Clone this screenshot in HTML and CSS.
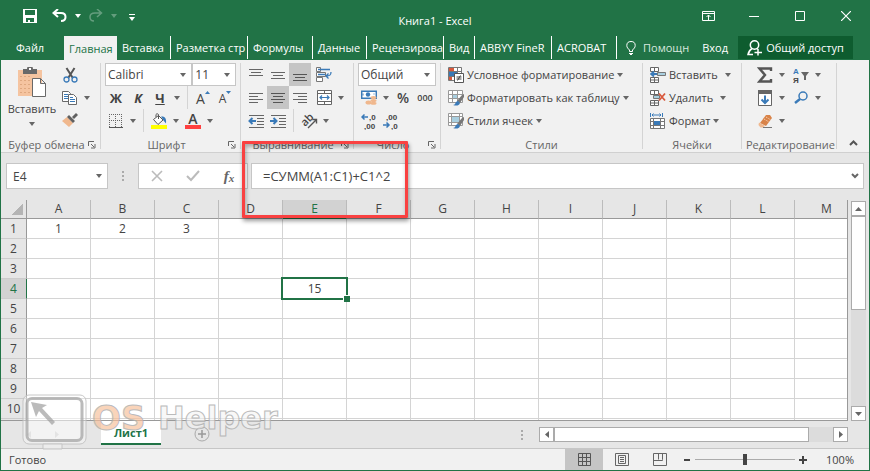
FILE: index.html
```
<!DOCTYPE html>
<html lang="ru">
<head>
    <meta charset="UTF-8">
    <meta name="viewport" content="width=device-width, initial-scale=1.0">
    <title>Книга1 - Excel</title>
    <link rel="stylesheet" href="styles.css">
</head>
<body>
<div class="window">
    <header class="titlebar">
        <div class="quick-access">
            <button class="qa-button" aria-label="Сохранить"><svg width="14" height="14" viewBox="0 0 14 14"><path d="M0 0h14v14H0zM2 1v5h10V1zM3 9v4h2v-2h2v2h4V9z" fill="#fff" fill-rule="evenodd"/></svg></button>
            <button class="qa-button" aria-label="Отменить"><svg width="16" height="14" viewBox="0 0 16 14"><path d="M6 0L1.500 4 6 8M2 4h7c3 0 4.500 1.500 4.500 4s-2 4-4.500 4" fill="none" stroke="#fff" stroke-width="2"/></svg></button>
            <span class="caret caret-white"></span>
            <button class="qa-button faded" aria-label="Вернуть"><svg width="16" height="14" viewBox="0 0 16 14"><path d="M9 0l4.500 4L9 8M13 4H7C4 4 2 5.500 2 8s1.500 4 4 4" fill="none" stroke="#fff" stroke-width="1.500"/></svg></button>
            <span class="caret caret-white faded"></span>
            <button class="qa-button qa-more" aria-label="Настройка панели"><svg width="6" height="8" viewBox="0 0 6 8"><path d="M0 0h6v1H0zM0 3h6L3 7z" fill="#fff"/></svg></button>
        </div>
        <div class="title">Книга1 - Excel</div>
        <div class="window-buttons">
            <button aria-label="Параметры ленты"><svg width="13" height="10" viewBox="0 0 13 10"><path d="M.5.5h12v9H.5zM0 2.500h13M6.500 9V4M4.500 6l2-2 2 2" fill="none" stroke="#fff"/></svg></button>
            <button aria-label="Свернуть"><svg width="10" height="10" viewBox="0 0 10 10"><path d="M0 5.500h10" stroke="#fff"/></svg></button>
            <button aria-label="Развернуть"><svg width="10" height="10" viewBox="0 0 10 10"><path d="M.5.5h9v9h-9z" fill="none" stroke="#fff"/></svg></button>
            <button aria-label="Закрыть"><svg width="10" height="10" viewBox="0 0 10 10"><path d="M0 0l10 10M10 0L0 10" stroke="#fff" stroke-width="1.200"/></svg></button>
        </div>
    </header>

    <nav class="tabs">
        <button class="tab tab-file">Файл</button>
        <button class="tab active">Главная</button>
        <button class="tab w-54">Вставка</button>
        <button class="tab w-77">Разметка стр</button>
        <button class="tab w-65">Формулы</button>
        <button class="tab w-54">Данные</button>
        <button class="tab w-77">Рецензирова</button>
        <button class="tab w-31">Вид</button>
        <button class="tab w-77">ABBYY FineR</button>
        <button class="tab w-65">ACROBAT</button>
        <button class="tell-me"><svg width="10" height="14" viewBox="0 0 10 14"><path d="M3.500 10.500V9C2 7.500.8 6.500.8 4.500a4.200 4 0 0 1 8.400 0c0 2-1.200 3-2.700 4.500v1.500zM3 12.500h4M4 13.500h2" fill="none" stroke="#fff"/></svg>Помощн</button>
        <button class="sign-in">Вход</button>
        <button class="share"><svg width="15" height="16" viewBox="0 0 15 16"><circle cx="7.500" cy="5" r="4.200" fill="none" stroke="#fff" stroke-width="1.500"/><path d="M5 8.500C2.500 10 1.500 12 1 14.500h5M10 8.500l1 1M11 9v6.500M7.500 12.500H15" fill="none" stroke="#fff" stroke-width="1.500"/></svg>Общий доступ</button>
    </nav>

    <section class="ribbon">
        <!-- Буфер обмена -->
        <div class="group group-clipboard">
            <div class="clipboard-tools">
                <button class="paste">
                    <svg width="30" height="31" viewBox="0 0 30 31"><path d="M1 3h24v26H1z" fill="#f5c4a0"/><path d="M4 9v17M8 9v17M12 9v17" stroke="#c98d60" stroke-dasharray="1 3"/><path d="M6 2h4a3 3 0 0 1 6 0h4v5H6z" fill="#696969"/><path d="M12 1h2v2h-2z" fill="#fff"/><path d="M15.500 11.500h8l5 5v13h-13zM23.500 11.500v5h5" fill="#fff" stroke="#696969"/></svg>
                    <span>Вставить</span>
                    <span class="caret"></span>
                </button>
                <div class="tool-column">
                    <div class="tool-row"><button class="tool" aria-label="Вырезать"><svg width="15" height="16" viewBox="0 0 15 16"><path d="M3.500 1l6 9.500M11.500 1l-6 9.500" stroke="#555" stroke-width="2" fill="none"/><circle cx="3.500" cy="12.500" r="2.500" fill="none" stroke="#3a7ab8" stroke-width="1.300"/><circle cx="11.500" cy="12.500" r="2.500" fill="none" stroke="#3a7ab8" stroke-width="1.300"/></svg></button></div>
                    <div class="tool-row"><button class="tool" aria-label="Копировать"><svg width="16" height="14" viewBox="0 0 16 14"><path d="M.5.5h6l2 2v8h-8z" fill="#fff" stroke="#696969"/><path d="M2 3.500h4M2 5.500h4M2 7.500h4" stroke="#3a7ab8"/><path d="M6.500 3.500h5l3 3v7h-8z" fill="#fff" stroke="#696969"/><path d="M8 6.500h3M8 8.500h5M8 10.500h5" stroke="#3a7ab8"/></svg></button><button class="drop" aria-label="Ещё"><span class="caret"></span></button></div>
                    <div class="tool-row"><button class="tool" aria-label="Формат по образцу"><svg width="16" height="15" viewBox="0 0 16 15"><path d="M0 8l5-4 6 6-4 4z" fill="#f0b88e"/><path d="M5 4l2-2 6 6-2 2zM10 4l4-4 2 2-4 4z" fill="#606060"/></svg></button></div>
                </div>
            </div>
            <div class="group-footer"><span>Буфер обмена</span><button class="launcher" aria-label="Буфер обмена"><svg width="8" height="8" viewBox="0 0 8 8"><path d="M.5 5V.5H6M3 3l3 3M7 3v4H3" fill="none" stroke="#666"/></svg></button></div>
        </div>

        <!-- Шрифт -->
        <div class="group group-font">
            <div class="tool-row">
                <label class="combo combo-font"><select aria-label="Шрифт"><option>Calibri</option></select></label>
                <label class="combo combo-size"><select aria-label="Размер"><option>11</option></select></label>
            </div>
            <div class="tool-row">
                <button class="tool glyph">Ж</button>
                <button class="tool glyph italic">К</button>
                <button class="tool glyph underline">Ч</button>
                <button class="drop" aria-label="Ещё"><span class="caret"></span></button>
                <span class="divider"></span>
                <button class="tool glyph-large">A<svg width="5" height="3" viewBox="0 0 5 3"><path d="M0 3h5L2.500 0z" fill="#3a7ab8"/></svg></button>
                <button class="tool glyph-small">A<svg width="5" height="3" viewBox="0 0 5 3"><path d="M0 0h5L2.500 3z" fill="#3a7ab8"/></svg></button>
            </div>
            <div class="tool-row">
                <button class="tool" aria-label="Границы"><svg width="14" height="14" viewBox="0 0 14 14"><path d="M0 .5h14M0 6.500h14M.5 0v13M6.500 0v13M12.500 0v13" stroke="#666" stroke-dasharray="1 1" fill="none"/><path d="M0 13.500h14" stroke="#555"/></svg></button>
                <button class="drop" aria-label="Ещё"><span class="caret"></span></button>
                <span class="divider"></span>
                <button class="tool" aria-label="Цвет заливки"><svg width="16" height="16" viewBox="0 0 16 16"><path d="M0 12h16v4H0z" fill="#ff0"/><path d="M2.500 6.500l5-4 4.500 4.500-5 4.500z" fill="#fff" stroke="#555"/><path d="M7.500 6V1.500A1.500 1.500 0 0 0 5 1.500V4" fill="none" stroke="#555"/><path d="M10 3.500c4-.5 5.500 2 5 7l-2.500-3z" fill="#3a7ab8"/></svg></button>
                <button class="drop" aria-label="Ещё"><span class="caret"></span></button>
                <button class="tool font-color">A</button>
                <button class="drop" aria-label="Ещё"><span class="caret"></span></button>
            </div>
            <div class="group-footer"><span>Шрифт</span><button class="launcher" aria-label="Шрифт"><svg width="8" height="8" viewBox="0 0 8 8"><path d="M.5 5V.5H6M3 3l3 3M7 3v4H3" fill="none" stroke="#666"/></svg></button></div>
        </div>

        <!-- Выравнивание -->
        <div class="group group-align">
            <div class="tool-row">
                <button class="tool" aria-label="По верхнему краю"><svg width="14" height="14" viewBox="0 0 14 14"><path d="M0 1.500h14M2 4.500h10M0 7.500h14" stroke="#666"/></svg></button>
                <button class="tool" aria-label="По середине"><svg width="14" height="14" viewBox="0 0 14 14"><path d="M0 4.500h14M2 7.500h10M0 10.500h14" stroke="#666"/></svg></button>
                <button class="tool pressed" aria-label="По нижнему краю"><svg width="14" height="14" viewBox="0 0 14 14"><path d="M0 6.500h14M2 9.500h10M0 12.500h14" stroke="#555"/></svg></button>
                <button class="tool after-gap" aria-label="Перенести текст"><svg width="16" height="15" viewBox="0 0 16 15"><path d="M.5.500h4v4h-4zM.5 5.500h9v4h-9zM.5 10.500h6v4h-6z" fill="#fff" stroke="#777"/><path d="M2 2.500h12M2 7.500h7" stroke="#3a7ab8" stroke-width="1.500"/><path d="M15 5c0 3-1 4-5 4M12.500 6.500L10 9l2.500 2.500" fill="none" stroke="#3a7ab8" stroke-width="1.300"/></svg></button>
            </div>
            <div class="tool-row">
                <button class="tool" aria-label="По левому краю"><svg width="14" height="12" viewBox="0 0 14 12"><path d="M0 1.500h14M0 4.500h9M0 7.500h14M0 10.500h9" stroke="#666"/></svg></button>
                <button class="tool pressed" aria-label="По центру"><svg width="14" height="12" viewBox="0 0 14 12"><path d="M0 1.500h14M2 4.500h10M0 7.500h14M2 10.500h10" stroke="#555"/></svg></button>
                <button class="tool" aria-label="По правому краю"><svg width="14" height="12" viewBox="0 0 14 12"><path d="M0 1.500h14M5 4.500h9M0 7.500h14M5 10.500h9" stroke="#666"/></svg></button>
                <button class="tool after-gap" aria-label="Объединить"><svg width="15" height="15" viewBox="0 0 15 15"><path d="M.5.500h14v14H.5zM.5 3.500h14M.5 11.500h14M7.500.5v3M7.500 11.500v3" fill="#fff" stroke="#666"/><path d="M3 7.500h9M5 5.500l-2 2 2 2M10 5.500l2 2-2 2" fill="none" stroke="#3a7ab8" stroke-width="1.200"/></svg></button>
                <button class="drop" aria-label="Ещё"><span class="caret"></span></button>
            </div>
            <div class="tool-row">
                <button class="tool" aria-label="Уменьшить отступ"><svg width="16" height="14" viewBox="0 0 16 14"><path d="M1 1.500h15M9 4.500h7M9 7.500h7M9 10.500h7M1 13.500h15" stroke="#666"/><path d="M1 7h7M4.500 4L1.500 7l3 3" fill="none" stroke="#3a7ab8" stroke-width="2"/></svg></button>
                <button class="tool" aria-label="Увеличить отступ"><svg width="16" height="14" viewBox="0 0 16 14"><path d="M1 1.500h15M9 4.500h7M9 7.500h7M9 10.500h7M1 13.500h15" stroke="#666"/><path d="M0 7h7M3.500 4l3 3-3 3" fill="none" stroke="#3a7ab8" stroke-width="2"/></svg></button>
                <span class="divider"></span>
                <button class="tool" aria-label="Ориентация"><svg width="18" height="18" viewBox="0 0 18 18"><text x="5" y="15" transform="rotate(-45 5 15)" class="rotated">ab</text><path d="M8 16l8-8M12.500 7.500H16.500V11.500" fill="none" stroke="#555" stroke-width="1.400"/></svg></button>
                <button class="drop" aria-label="Ещё"><span class="caret"></span></button>
            </div>
            <div class="group-footer"><span>Выравнивание</span><button class="launcher" aria-label="Выравнивание"><svg width="8" height="8" viewBox="0 0 8 8"><path d="M.5 5V.5H6M3 3l3 3M7 3v4H3" fill="none" stroke="#666"/></svg></button></div>
        </div>

        <!-- Число -->
        <div class="group group-number">
            <div class="tool-row">
                <label class="combo combo-format"><select aria-label="Формат числа"><option>Общий</option></select></label>
            </div>
            <div class="tool-row">
                <button class="tool" aria-label="Денежный формат"><svg width="16" height="15" viewBox="0 0 16 15"><path d="M.7 1.200h14.600v7H.7z" fill="#fff" stroke="#3a7ab8" stroke-width="1.500"/><circle cx="7" cy="4.500" r="2.200" fill="#3a7ab8"/><path d="M2 3.500v2M13 3.500v1" stroke="#3a7ab8"/><ellipse cx="12.500" cy="7.500" rx="3" ry="1.500" fill="#f0b88e"/><ellipse cx="12.500" cy="10.500" rx="3" ry="1.500" fill="#f0b88e"/><ellipse cx="12.500" cy="13.300" rx="3" ry="1.500" fill="#f0b88e"/><ellipse cx="7.500" cy="12.500" rx="3" ry="2" fill="#f0b88e"/></svg></button>
                <button class="drop" aria-label="Ещё"><span class="caret"></span></button>
                <button class="tool percent">%</button>
                <button class="tool thousands">000</button>
            </div>
            <div class="tool-row">
                <button class="tool" aria-label="Увеличить разрядность"><svg width="16" height="18" viewBox="0 0 16 18"><path d="M1 5h6M3.500 2.500L1 5l2.500 2.500" fill="none" stroke="#3a7ab8" stroke-width="1.500"/><text x="8" y="8" class="digits">,0</text><text x="3" y="17" class="digits">,00</text></svg></button>
                <button class="tool" aria-label="Уменьшить разрядность"><svg width="16" height="18" viewBox="0 0 16 18"><path d="M0 13h6M3.500 10.500L6 13l-2.500 2.500" fill="none" stroke="#3a7ab8" stroke-width="1.500"/><text x="3" y="8" class="digits">,00</text><text x="8" y="17" class="digits">,0</text></svg></button>
            </div>
            <div class="group-footer"><span>Число</span><button class="launcher" aria-label="Число"><svg width="8" height="8" viewBox="0 0 8 8"><path d="M.5 5V.5H6M3 3l3 3M7 3v4H3" fill="none" stroke="#666"/></svg></button></div>
        </div>

        <!-- Стили -->
        <div class="group group-styles">
            <div class="tool-row"><button class="command"><svg width="16" height="16" viewBox="0 0 16 16"><path d="M.5.500h13v13H.5zM.5 4.500h13M.5 9.500h13M9.500.5v13" fill="#fff" stroke="#777"/><path d="M1 1h5v3H1z" fill="#d9593d"/><path d="M1 5h8v4H1z" fill="#3a7ab8"/><path d="M1 10h3v3H1z" fill="#d9593d"/><path d="M6.500 6.500h9v9h-9z" fill="#fff" stroke="#555"/><path d="M8.500 10h5M8.500 12h5M12.500 8.500l-3 5" stroke="#444"/></svg>Условное форматирование<span class="caret"></span></button></div>
            <div class="tool-row"><button class="command"><svg width="16" height="16" viewBox="0 0 16 16"><path d="M.5.500h14v12H.5zM.5 4.500h14M.5 8.500h14M4.500.5v12M9.500.5v12" fill="#fff" stroke="#999"/><path d="M5 5h4v3H5z" fill="#a9cfe0"/><path d="M9 11l5-6 2-1v3l-4 6z" fill="#777"/><path d="M5 15c3 0 2-4 5-4l2 2c-1 3-4 3-7 2z" fill="#3a7ab8"/></svg>Форматировать как таблицу<span class="caret"></span></button></div>
            <div class="tool-row"><button class="command"><svg width="16" height="16" viewBox="0 0 16 16"><path d="M.5.500h14v12H.5zM.5 3.500h14M.5 9.500h14M3.500.5v12M11.500.5v12" fill="#fff" stroke="#999"/><path d="M4 4h7v5H4z" fill="#a9cfe0"/><path d="M9 11l5-6 2-1v3l-4 6z" fill="#777"/><path d="M5 15c3 0 2-4 5-4l2 2c-1 3-4 3-7 2z" fill="#3a7ab8"/></svg>Стили ячеек<span class="caret"></span></button></div>
            <div class="group-footer"><span>Стили</span></div>
        </div>

        <!-- Ячейки -->
        <div class="group group-cells">
            <div class="tool-row"><button class="command"><svg width="16" height="16" viewBox="0 0 16 16"><path d="M.5.500h8v4h-8zM4.500.5v4M.5 10.500h8v5h-8zM4.500 10.500v5M.5 13h8" fill="#fff" stroke="#666"/><path d="M7.500 5.500h8v3h-8z" fill="#a9cfe0" stroke="#777"/><path d="M1 7h6M4 4.500L1 7l3 2.500" fill="none" stroke="#3a7ab8" stroke-width="1.800"/></svg>Вставить</button><button class="drop drop-wide" aria-label="Ещё"><span class="caret"></span></button></div>
            <div class="tool-row"><button class="command"><svg width="16" height="16" viewBox="0 0 16 16"><path d="M.5.500h8v4h-8zM4.500.5v4M.5 10.500h8v5h-8zM4.500 10.500v5M.5 13h8" fill="#fff" stroke="#666"/><path d="M3.500 5.500h6v3h-6z" fill="#a9cfe0" stroke="#777"/><path d="M9 3.500l6 7M15 3.500l-6 7" stroke="#d9593d" stroke-width="1.800"/></svg>Удалить</button><button class="drop drop-wide" aria-label="Ещё"><span class="caret"></span></button></div>
            <div class="tool-row"><button class="command"><svg width="16" height="16" viewBox="0 0 16 16"><path d="M.5 0v4M12.500 0v4M2 2h9M3.500.5L2 2l1.500 1.500M9.500.5L11 2 9.500 3.500" fill="none" stroke="#3a7ab8"/><path d="M.5 5.500h14v10H.5zM.5 8.500h14M.5 12.500h14M3.500 5.500v10M10.500 5.500v10" fill="#fff" stroke="#777"/><path d="M4 8h6v4H4z" fill="#3a7ab8"/></svg>Формат<span class="caret"></span></button></div>
            <div class="group-footer"><span>Ячейки</span></div>
        </div>

        <!-- Редактирование -->
        <div class="group group-edit">
            <div class="tool-row">
                <button class="tool" aria-label="Сумма"><svg width="16" height="16" viewBox="0 0 16 16"><path d="M14 4V1.500H2.500L8 8l-5.500 6.500H14V12" fill="none" stroke="#555" stroke-width="2.400"/></svg></button>
                <button class="drop" aria-label="Ещё"><span class="caret"></span></button>
                <button class="tool after-gap" aria-label="Сортировка и фильтр"><svg width="16" height="18" viewBox="0 0 16 18"><text x="0" y="8" class="sort-a">А</text><text x="0" y="17" class="sort-z">Я</text><path d="M8 6h8l-3 4v4h-2v-4z" fill="#666"/></svg></button>
                <button class="drop" aria-label="Ещё"><span class="caret"></span></button>
            </div>
            <div class="tool-row">
                <button class="tool" aria-label="Заполнить"><svg width="14" height="16" viewBox="0 0 14 16"><path d="M.5 1.500h13v14H.5z" fill="#fff" stroke="#666"/><path d="M0 0h14v4H0z" fill="#666"/><path d="M7 5.500v7M3.500 9.500L7 13l3.500-3.500" fill="none" stroke="#3a7ab8" stroke-width="2"/></svg></button>
                <button class="drop" aria-label="Ещё"><span class="caret"></span></button>
                <button class="tool after-gap" aria-label="Найти и выделить"><svg width="15" height="14" viewBox="0 0 15 14"><circle cx="9" cy="5" r="4" fill="none" stroke="#3a7ab8" stroke-width="1.500"/><path d="M6 8l-5 4" stroke="#3a7ab8" stroke-width="2.400"/></svg></button>
                <button class="drop" aria-label="Ещё"><span class="caret"></span></button>
            </div>
            <div class="tool-row">
                <button class="tool" aria-label="Очистить"><svg width="15" height="14" viewBox="0 0 15 14"><path d="M2 9l6-8h4l2 3-6 8z" fill="#d98348"/><path d="M1 8.500L7 12l-2 1.500H2.500L.5 11z" fill="#f0b88e"/><path d="M6 5l5 3M8 3l5 3" stroke="#f7d9c0" stroke-dasharray="1 1"/><path d="M5 13.500h9" stroke="#777"/></svg></button>
                <button class="drop" aria-label="Ещё"><span class="caret"></span></button>
            </div>
            <div class="group-footer"><span>Редактирование</span></div>
        </div>

        <button class="collapse" aria-label="Свернуть ленту"><svg width="9" height="6" viewBox="0 0 9 6"><path d="M1 5l3.500-3.500L8 5" fill="none" stroke="#555" stroke-width="2"/></svg></button>

        <div class="highlight-frame"></div>
    </section>

    <section class="formula-bar">
        <label class="combo name-box"><input type="text" value="E4" aria-label="Имя ячейки"></label>
        <span class="grip"></span>
        <div class="formula-buttons">
            <button aria-label="Отмена"><svg width="12" height="12" viewBox="0 0 12 12"><path d="M1 1l10 10M11 1L1 11" stroke="#bbb" stroke-width="1.600"/></svg></button>
            <button aria-label="Ввод"><svg width="14" height="12" viewBox="0 0 14 12"><path d="M1 6l4 4 8-9" fill="none" stroke="#bbb" stroke-width="2"/></svg></button>
            <button class="fx">f<small>x</small></button>
        </div>
        <div class="formula-field">
            <input type="text" value="=СУММ(A1:C1)+C1^2" aria-label="Строка формул">
            <button aria-label="Развернуть строку формул"><svg width="8" height="6" viewBox="0 0 8 6"><path d="M1 1l3 3 3-3" fill="none" stroke="#666" stroke-width="2"/></svg></button>
        </div>
    </section>

    <main class="sheet">
        <div class="grid-view">
            <table class="grid">
                <thead>
                    <tr><th class="corner"></th><th>A</th><th>B</th><th>C</th><th>D</th><th class="selected">E</th><th>F</th><th>G</th><th>H</th><th>I</th><th>J</th><th>K</th><th>L</th><th>M</th></tr>
                </thead>
                <tbody>
                    <tr><th>1</th><td>1</td><td>2</td><td>3</td><td></td><td></td><td></td><td></td><td></td><td></td><td></td><td></td><td></td><td></td></tr>
                    <tr><th>2</th><td></td><td></td><td></td><td></td><td></td><td></td><td></td><td></td><td></td><td></td><td></td><td></td><td></td></tr>
                    <tr><th>3</th><td></td><td></td><td></td><td></td><td></td><td></td><td></td><td></td><td></td><td></td><td></td><td></td><td></td></tr>
                    <tr><th class="selected">4</th><td></td><td></td><td></td><td></td><td class="current">15</td><td></td><td></td><td></td><td></td><td></td><td></td><td></td><td></td></tr>
                    <tr><th>5</th><td></td><td></td><td></td><td></td><td></td><td></td><td></td><td></td><td></td><td></td><td></td><td></td><td></td></tr>
                    <tr><th>6</th><td></td><td></td><td></td><td></td><td></td><td></td><td></td><td></td><td></td><td></td><td></td><td></td><td></td></tr>
                    <tr><th>7</th><td></td><td></td><td></td><td></td><td></td><td></td><td></td><td></td><td></td><td></td><td></td><td></td><td></td></tr>
                    <tr><th>8</th><td></td><td></td><td></td><td></td><td></td><td></td><td></td><td></td><td></td><td></td><td></td><td></td><td></td></tr>
                    <tr><th>9</th><td></td><td></td><td></td><td></td><td></td><td></td><td></td><td></td><td></td><td></td><td></td><td></td><td></td></tr>
                    <tr><th>10</th><td></td><td></td><td></td><td></td><td></td><td></td><td></td><td></td><td></td><td></td><td></td><td></td><td></td></tr>
                    <tr><th></th><td></td><td></td><td></td><td></td><td></td><td></td><td></td><td></td><td></td><td></td><td></td><td></td><td></td></tr>
                </tbody>
            </table>
        </div>
        <div class="scroll-v">
            <button aria-label="Вверх"><svg width="7" height="4" viewBox="0 0 7 4"><path d="M0 4h7L3.500 0z" fill="#666"/></svg></button>
            <div class="thumb"></div>
            <button class="scroll-end" aria-label="Вниз"><svg width="7" height="4" viewBox="0 0 7 4"><path d="M0 0h7L3.500 4z" fill="#666"/></svg></button>
        </div>
    </main>

    <section class="sheet-bar">
        <div class="sheet-nav">
            <button aria-label="Предыдущий лист"><svg width="4" height="7" viewBox="0 0 4 7"><path d="M4 0v7L0 3.500z" fill="#c4c4c4"/></svg></button>
            <button aria-label="Следующий лист"><svg width="4" height="7" viewBox="0 0 4 7"><path d="M0 0v7l4-3.500z" fill="#c4c4c4"/></svg></button>
        </div>
        <button class="sheet-tab">Лист1</button>
        <button class="add-sheet" aria-label="Новый лист"><svg width="16" height="16" viewBox="0 0 16 16"><circle cx="8" cy="8" r="7" fill="none" stroke="#aaa"/><path d="M8 4v8M4 8h8" stroke="#999" stroke-width="1.500"/></svg></button>
        <span class="grip"></span>
        <div class="scroll-h">
            <button aria-label="Влево"><svg width="4" height="7" viewBox="0 0 4 7"><path d="M4 0v7L0 3.500z" fill="#666"/></svg></button>
            <div class="thumb"></div>
            <button class="scroll-end" aria-label="Вправо"><svg width="4" height="7" viewBox="0 0 4 7"><path d="M0 0v7l4-3.500z" fill="#666"/></svg></button>
        </div>
        <!-- Водяной знак поверх листа -->
        <svg class="watermark" width="262" height="58" viewBox="0 0 262 58">
            <rect x="1" y="2" width="63" height="49" rx="6" fill="#fff" fill-opacity=".4" stroke="#c0c0c0"/>
            <rect x="5" y="5.500" width="55" height="42" rx="5" fill="#fff" fill-opacity=".4" stroke="#b0b0b0" stroke-width="3"/>
            <path d="M21 51h19v5H21z" fill="#eee" stroke="#c0c0c0"/>
            <path d="M9 9l16 3-5 3 13 14-3 3-13-14-3 6z" fill="#b0b0b0"/>
            <text x="70" y="37" class="mark-os">OS</text>
            <text x="136" y="36" class="mark-helper">Helper</text>
        </svg>
    </section>

    <footer class="status-bar">
        <span class="status-text">Готово</span>
        <button class="view pressed" aria-label="Обычный"><svg width="13" height="13" viewBox="0 0 13 13"><path d="M.5.500h12v12H.5zM.5 4.500h12M.5 8.500h12M4.500.5v12M8.500.5v12" fill="none" stroke="#555"/></svg></button>
        <button class="view" aria-label="Разметка страницы"><svg width="14" height="13" viewBox="0 0 14 13"><path d="M.5.500h13v12H.5zM3.500 2.500h7v8h-7zM5 4.500h4M5 6.500h4M5 8.500h4" fill="none" stroke="#666"/></svg></button>
        <button class="view" aria-label="Страничный режим"><svg width="14" height="13" viewBox="0 0 14 13"><path d="M.5.500h13v12H.5zM5.500.5v6M9.500.5v6M.5 7.500h9v-1" fill="none" stroke="#666"/></svg></button>
        <button class="zoom-step" aria-label="Уменьшить"><svg width="8" height="8" viewBox="0 0 8 8"><path d="M1 4h6" stroke="#444" stroke-width="2"/></svg></button>
        <input class="zoom-range" type="range" min="0" max="200" value="100" aria-label="Масштаб">
        <button class="zoom-step" aria-label="Увеличить"><svg width="8" height="8" viewBox="0 0 8 8"><path d="M0 4h8M4 0v8" stroke="#444" stroke-width="2"/></svg></button>
        <button class="zoom-value">100%</button>
    </footer>
</div>
</body>
</html>
```
FILE: styles.css
```
* {
    margin: 0;
    padding: 0;
    box-sizing: border-box;
}

body {
    background-color: #217346;
    font-family: "Open Sans", "Noto Sans", sans-serif;
    font-size: 11px;
    color: #444;
}

button,
input,
select {
    font: inherit;
    color: inherit;
    border: none;
    background: none;
    border-radius: 0;
}

button {
    display: flex;
    align-items: center;
    justify-content: center;
    white-space: nowrap;
    flex-shrink: 0;
}

svg {
    display: block;
    flex-shrink: 0;
}

.window {
    height: 100vh;
    display: flex;
    flex-direction: column;
    border: 1px solid #217346;
    border-top: none;
    overflow: hidden;
}

.caret {
    width: 0;
    height: 0;
    flex-shrink: 0;
    border: 3px solid transparent;
    border-top: 4px solid #666;
    border-bottom: none;
}

.caret-white {
    border-top-color: #fff;
}

.faded {
    opacity: 0.3;
}

/* Заголовок окна */
.titlebar {
    height: 36px;
    flex-shrink: 0;
    display: grid;
    grid-template-columns: 1fr auto 1fr;
    align-items: center;
    color: #fff;
}

.quick-access {
    display: flex;
    align-items: center;
    padding-left: 18px;
    padding-bottom: 4px;
}

.qa-button {
    width: 22px;
    height: 24px;
}

.quick-access .caret {
    margin: 0 4px;
}

.quick-access .qa-button:nth-child(2) {
    margin-left: 8px;
}

.quick-access .qa-more {
    padding-top: 4px;
}

.title {
    padding-top: 4px;
}

.window-buttons {
    display: flex;
    justify-content: flex-end;
    padding-bottom: 4px;
}

.window-buttons button {
    width: 46px;
    height: 32px;
}

/* Вкладки */
.tabs {
    display: flex;
    height: 24px;
    flex-shrink: 0;
    color: #fff;
}

.tab {
    justify-content: flex-start;
    padding-left: 5px;
    border-right: 1px solid #fff;
    height: 23px;
}

.tab-file {
    width: 63px;
    padding-left: 15px;
    border-right: none;
}

.tab.active {
    width: 53px;
    height: 24px;
    background-color: #f1f1f1;
    color: #217346;
    border-right: none;
}

.w-31 { width: 31px; }
.w-54 { width: 54px; }
.w-65 { width: 65px; }
.w-77 { width: 77px; }

.tell-me {
    gap: 7px;
    margin-left: 9px;
    color: #d8e8df;
}

.tell-me,
.sign-in,
.share {
    height: 23px;
}

.sign-in {
    margin-left: auto;
    padding: 0 10px;
}

.share {
    width: 115px;
    gap: 4px;
    margin-right: 16px;
    background-color: #0e5c2f;
}

/* Лента */
.ribbon {
    position: relative;
    display: flex;
    height: 93px;
    flex-shrink: 0;
    padding: 3px 0;
    background-color: #f1f1f1;
    border-bottom: 1px solid #d0d0d0;
}

.group {
    display: flex;
    flex-direction: column;
    flex-shrink: 0;
    padding: 0 4px;
    border-right: 1px solid #d4d4d4;
}

.group-clipboard { width: 100px; }
.group-font { width: 140px; }
.group-align { width: 113px; }
.group-number { width: 87px; }
.group-styles { width: 202px; }
.group-cells { width: 99px; }
.group-edit { width: 95px; }

.clipboard-tools {
    display: flex;
}

.paste {
    width: 54px;
    flex-direction: column;
    justify-content: flex-start;
    padding-top: 4px;
    line-height: 22px;
}

.paste .caret {
    margin-top: 2px;
}

.tool-row {
    display: flex;
    height: 23px;
    flex-shrink: 0;
}

.tool {
    width: 22px;
    height: 23px;
}

.drop {
    width: 12px;
    height: 23px;
}

.drop-wide {
    width: 20px;
}

.pressed {
    background-color: #c5c5c5;
}

.after-gap {
    margin-left: 2px;
}

.group-edit .tool-row {
    padding-left: 8px;
}

.divider {
    width: 1px;
    margin: 0 4px;
    background-color: #d4d4d4;
}

.combo {
    position: relative;
    display: block;
    font-size: 12px;
    background-color: #fff;
    border: 1px solid #c6c6c6;
}

.combo::after {
    content: "";
    position: absolute;
    right: 5px;
    top: 50%;
    margin-top: -2px;
    border: 3px solid transparent;
    border-top: 4px solid #666;
    border-bottom: none;
    pointer-events: none;
}

.combo select,
.combo input {
    width: 100%;
    height: 100%;
    padding-left: 2px;
    appearance: none;
}

.combo-font { width: 88px; }
.combo-size { width: 44px; }
.combo-format { width: 78px; }

.glyph {
    font-size: 13px;
    font-weight: bold;
}

.italic {
    font-style: italic;
}

.underline {
    text-decoration: underline;
}

.glyph-large {
    align-items: flex-end;
    font-size: 14px;
    line-height: 21px;
}

.glyph-small {
    align-items: flex-end;
    font-size: 12px;
    line-height: 20px;
}

.glyph-large svg,
.glyph-small svg {
    align-self: flex-start;
    margin-top: 5px;
}

.font-color {
    font-size: 14px;
    font-weight: 600;
    line-height: 15px;
    width: 16px;
    height: 18px;
    align-items: flex-start;
    margin: 2px 3px 0;
    border-bottom: 4px solid #ff4040;
}

.percent {
    font-size: 14px;
    font-weight: 600;
}

.thousands {
    font-size: 9px;
    font-weight: 600;
}

.digits,
.sort-a,
.sort-z {
    font-family: "Liberation Sans", sans-serif;
    font-size: 8px;
    font-weight: bold;
    fill: #444;
}

.sort-a {
    fill: #3a7ab8;
}

.rotated {
    font-size: 11px;
    font-weight: 600;
    fill: #444;
}

.command {
    padding-left: 3px;
    gap: 3px;
}

.group-footer {
    display: flex;
    flex: 1;
    align-items: center;
    padding-top: 6px;
    color: #666;
    white-space: nowrap;
    line-height: 14px;
}

.group-footer span {
    flex: 1;
    text-align: center;
}

.launcher {
    width: 8px;
    height: 12px;
}

.collapse {
    flex: 1;
    align-items: flex-end;
    padding-bottom: 3px;
}

/* Рамка вокруг формулы */
.highlight-frame {
    position: absolute;
    left: 241px;
    top: 81px;
    width: 166px;
    height: 77px;
    border: 3px solid #f94141;
    border-radius: 1px;
    box-shadow: 1px 3px 4px rgba(0, 0, 0, 0.4), inset 1px 3px 4px rgba(0, 0, 0, 0.3);
    pointer-events: none;
    z-index: 5;
}

/* Строка формул */
.formula-bar {
    display: flex;
    flex-shrink: 0;
    height: 47px;
    padding: 10px 5px 11px;
    background-color: #e6e6e6;
}

.name-box {
    width: 102px;
}

.name-box input {
    padding-left: 6px;
}

.grip {
    width: 2px;
    height: 10px;
    align-self: center;
    background: repeating-linear-gradient(#aaa 0 2px, transparent 2px 4px);
}

.formula-bar .grip {
    margin: 0 14px;
}

.formula-buttons {
    display: flex;
    width: 110px;
    margin-right: 3px;
    background-color: #fff;
    border: 1px solid #c6c6c6;
}

.formula-buttons button {
    width: 36px;
}

.formula-buttons .fx {
    font-family: "Liberation Serif", serif;
    font-size: 15px;
    font-style: italic;
    font-weight: bold;
    color: #666;
}

.fx small {
    font-size: 11px;
    padding-top: 3px;
}

.formula-field {
    display: flex;
    flex: 1;
    background-color: #fff;
    border: 1px solid #c6c6c6;
}

.formula-field input {
    flex: 1;
    min-width: 0;
    padding-left: 11px;
    font-size: 13px;
}

.formula-field button {
    width: 16px;
}

/* Лист */
.sheet {
    display: flex;
    flex: 1;
    min-height: 0;
    background-color: #e6e6e6;
}

.grid-view {
    flex: 1;
    min-width: 0;
    overflow: hidden;
    border-right: 1px solid #999;
    border-bottom: 1px solid #999;
}

.grid {
    width: 858px;
    table-layout: fixed;
    border-spacing: 0;
    background-color: #fff;
    font-size: 12px;
}

.grid th {
    height: 20px;
    font-weight: normal;
    line-height: 18px;
    background-color: #e6e6e6;
    border-right: 1px solid #bbb;
    border-bottom: 1px solid #ccc;
}

.grid thead th {
    height: 19px;
    border-bottom-color: #999;
}

.grid tbody th,
.grid .corner {
    width: 26px;
    border-right-color: #999;
}

.grid .corner {
    background: linear-gradient(135deg, transparent 50%, #b4b4b4 50%) no-repeat right 3px bottom 3px / 11px 11px #e6e6e6;
}

.grid td {
    height: 20px;
    text-align: center;
    line-height: 18px;
    border-right: 1px solid #d4d4d4;
    border-bottom: 1px solid #d4d4d4;
}

.grid .selected {
    color: #217346;
    background-color: #d2d2d2;
}

.grid thead .selected {
    border-bottom-color: #217346;
}

.grid tbody .selected {
    border-right-color: #217346;
}

.grid .current {
    position: relative;
}

.current::before {
    content: "";
    position: absolute;
    inset: -2px;
    border: 2px solid #217346;
}

.current::after {
    content: "";
    position: absolute;
    right: -4px;
    bottom: -4px;
    width: 6px;
    height: 6px;
    background-color: #217346;
    border: 1px solid #fff;
    border-right: none;
    border-bottom: none;
}

.scroll-v {
    display: flex;
    flex-direction: column;
    width: 15px;
    margin: 1px 3px 0;
    background-color: #dcdcdc;
}

.scroll-v button,
.scroll-h button {
    width: 15px;
    height: 15px;
    background-color: #fff;
    border: 1px solid #ababab;
}

.scroll-v .thumb {
    height: 94px;
    background-color: #fff;
    border: 1px solid #ababab;
}

.scroll-v .scroll-end {
    margin-top: auto;
}

/* Ярлыки листов */
.sheet-bar {
    position: relative;
    display: flex;
    align-items: flex-start;
    flex-shrink: 0;
    height: 28px;
    background-color: #e6e6e6;
    border-bottom: 1px solid #c6c6c6;
}

.sheet-nav {
    display: flex;
    width: 100px;
    height: 27px;
    padding-left: 26px;
    gap: 24px;
}

.sheet-tab {
    width: 60px;
    height: 24px;
    color: #217346;
    font-weight: bold;
    background-color: #fff;
    border-bottom: 2px solid #217346;
}

.add-sheet {
    margin: 5px 0 0 33px;
}

.sheet-bar .grip {
    margin-left: auto;
    margin-right: 16px;
}

.scroll-h {
    display: flex;
    width: 309px;
    margin: 6px 21px 0 0;
    background-color: #dcdcdc;
}

.scroll-h .thumb {
    width: 255px;
    background-color: #fff;
    border: 1px solid #ababab;
}

.scroll-h .scroll-end {
    margin-left: auto;
}

.watermark {
    position: absolute;
    left: 21px;
    bottom: -3px;
    opacity: 0.85;
    pointer-events: none;
}

.mark-os,
.mark-helper {
    font-family: "DejaVu Sans", sans-serif;
    font-size: 32px;
    font-weight: bold;
    stroke: #b0b0b0;
}

.mark-os {
    font-size: 34px;
    fill: #f8bf98;
    fill-opacity: 0.8;
}

.mark-helper {
    fill: #f4f4f4;
    fill-opacity: 0.7;
}

/* Строка состояния */
.status-bar {
    display: flex;
    align-items: center;
    flex-shrink: 0;
    height: 21px;
    background-color: #f1f1f1;
}

.status-text {
    margin-right: auto;
    padding-left: 8px;
}

.view {
    width: 38px;
    height: 21px;
}

.zoom-step {
    width: 16px;
    height: 21px;
}

.zoom-range {
    width: 100px;
    height: 12px;
    appearance: none;
    background: linear-gradient(#ababab, #ababab) no-repeat center / 100% 1px;
}

.zoom-range::-webkit-slider-thumb {
    appearance: none;
    width: 4px;
    height: 11px;
    background-color: #444;
}

.zoom-value {
    width: 58px;
    height: 21px;
}
```
